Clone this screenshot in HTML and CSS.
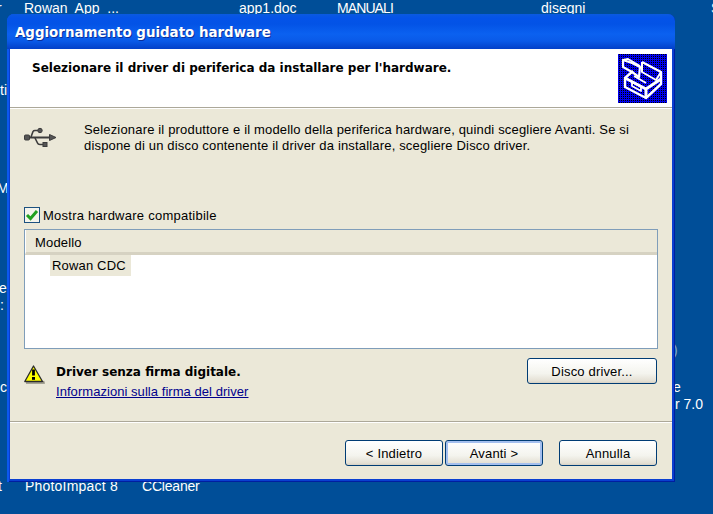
FILE: index.html
```html
<!DOCTYPE html>
<html lang="it">
<head>
<meta charset="utf-8">
<title>Aggiornamento guidato hardware</title>
<link rel="stylesheet" href="styles.css">
</head>
<body>
<div class="desktop">
  <span class="label l-r">r</span>
  <span class="label l-rowan">Rowan&nbsp; App &nbsp;...</span>
  <span class="label l-app">app1.doc</span>
  <span class="label l-man">MANUALI</span>
  <span class="label l-dis">disegni</span>
  <span class="label l-s">S</span>
  <span class="label l-ti">ti</span>
  <span class="label l-m">M</span>
  <span class="label l-e">e</span>
  <span class="label l-t2">:</span>
  <span class="label l-cl">cl</span>
  <span class="label l-b">)</span>
  <span class="label l-e2">e</span>
  <span class="label l-r7">r 7.0</span>
  <span class="label l-t">t</span>
  <span class="label l-photo">PhotoImpact 8</span>
  <span class="label l-cc">CCleaner</span>

  <section class="window">
    <header class="titlebar">Aggiornamento guidato hardware</header>
    <div class="client">
      <div class="head">
        <h1 class="head-title">Selezionare il driver di periferica da installare per l'hardware.</h1>
        <svg class="head-icon" width="49" height="49" viewBox="0 0 49 49" aria-hidden="true">
          <g fill="none" stroke="#fff" stroke-linejoin="round">
            <path d="M24 8 L43 18 L43 30 L28 44 L7 33 L7 24 L15 17" stroke-width="2.400"/>
            <path d="M24 8 L24 18 L38 26 L43 18" stroke-width="2"/>
            <path d="M28 44 L28 35 L43 25" stroke-width="3"/>
            <path d="M7 24 L28 35" stroke-width="3"/>
            <path d="M5 6 L5 13 L14 18 L21 23 L22 13 L14 9 Z" stroke-width="2.200"/>
            <path d="M5 6 L10 5 L22 12" stroke-width="2"/>
            <path d="M14 32 L23 37 L23 33 L14 28 Z" stroke-width="1.800"/>
            <path d="M16 22 L28 29" stroke-width="2"/>
          </g>
        </svg>
      </div>
      <div class="body">
        <div class="intro">
          <svg class="usb" width="34" height="22" viewBox="0 0 34 22" aria-hidden="true">
            <g fill="#555" stroke="#3c3c3c">
              <path d="M5 10.500 H26" fill="none" stroke-width="2"/>
              <path d="M7 10 L9 4.500 Q9.500 3.500 11 3.500 H14" fill="none" stroke-width="1.600"/>
              <path d="M11 11 L13.500 16 Q14 17.500 16 17.500 H19" fill="none" stroke-width="1.600"/>
              <rect x="0.500" y="8" width="5" height="5" rx="1"/>
              <circle cx="16" cy="3.500" r="2.200"/>
              <rect x="19" y="15.500" width="4" height="4"/>
              <path d="M25.500 7.500 L32 10.500 L25.500 13.500 Z" stroke-width="1"/>
            </g>
          </svg>
          <p class="intro-text">Selezionare il produttore e il modello della periferica hardware, quindi scegliere Avanti. Se si<br>dispone di un disco contenente il driver da installare, scegliere Disco driver.</p>
        </div>
        <label class="check">
          <span class="check-box">
            <svg width="14" height="14" viewBox="0 0 14 14" aria-hidden="true"><path d="M2 7 L5.500 10.500 L12 3" fill="none" stroke="#21a121" stroke-width="3"/></svg>
          </span>
          Mostra hardware compatibile
        </label>
        <div class="list">
          <div class="list-head">Modello</div>
          <div class="list-rows"><span class="list-row">Rowan CDC</span></div>
        </div>
        <div class="sign">
          <svg class="warn" width="21" height="19" viewBox="0 0 21 19" aria-hidden="true">
            <path d="M2 18 H20 L19.500 16" fill="none" stroke="#8f8c7e" stroke-width="1.500"/>
            <path d="M9.500 1 L18.500 16.500 H0.800 Z" fill="#ffff00" stroke="#2a2a2a" stroke-width="1.300" stroke-linejoin="round"/>
            <path d="M9.500 4.500 V10.500" stroke="#000" stroke-width="2.800"/>
            <rect x="8" y="12" width="3" height="2.800" fill="#000"/>
          </svg>
          <div class="sign-text">
            <strong class="sign-title">Driver senza firma digitale.</strong>
            <a class="sign-link" href="#">Informazioni sulla firma del driver</a>
          </div>
          <button class="btn btn-disk" type="button">Disco driver...</button>
        </div>
      </div>
      <footer class="foot">
        <button class="btn" type="button">&lt; Indietro</button>
        <button class="btn btn-default" type="button">Avanti &gt;</button>
        <button class="btn btn-cancel" type="button">Annulla</button>
      </footer>
    </div>
  </section>
</div>
</body>
</html>
```
FILE: styles.css
```css
* { box-sizing: border-box; }
html, body { margin: 0; padding: 0; }
body { width: 713px; height: 514px; overflow: hidden; background: #004e98; font-family: "Liberation Sans", Arial, sans-serif; font-size: 13px; letter-spacing: 0.17px; color: #000; }
.desktop { position: relative; width: 713px; height: 514px; overflow: hidden; }
.label { position: absolute; color: #fff; font-size: 14px; letter-spacing: 0; line-height: 16px; white-space: nowrap; }
.l-r { left: -3px; top: 0; }
.l-rowan { left: 24px; top: 0; }
.l-app { left: 239px; top: 0; }
.l-man { left: 337px; top: 0; letter-spacing: -0.900px; }
.l-dis { left: 541px; top: 0; }
.l-s { left: 711px; top: 0; }
.l-ti { left: 0; top: 82px; }
.l-m { left: -3px; top: 180px; }
.l-e { left: -1px; top: 280px; }
.l-t2 { left: 0; top: 297px; }
.l-cl { left: 0; top: 379px; }
.l-b { left: 673px; top: 342px; opacity: 0.5; }
.l-e2 { left: 673px; top: 379px; }
.l-r7 { left: 675px; top: 396px; }
.l-t { left: -2px; top: 478px; }
.l-photo { left: 25px; top: 478px; letter-spacing: 0.200px; }
.l-cc { left: 142px; top: 478px; letter-spacing: -0.200px; }

.window { position: absolute; left: 7px; top: 14px; width: 668px; height: 468px; display: flex; flex-direction: column; border-radius: 7px 7px 0 0; background: #0a3fd0; box-shadow: inset 2px 0 0 #0c58ee, inset -1px -1px 0 #001ea0; }
.titlebar { height: 35px; flex: none; padding: 11px 0 0 8px; border-radius: 7px 7px 0 0; background: linear-gradient(#0a5ae0 0, #0453e8 4px, #0353e6 10px, #0b61f0 20px, #0a5ae8 27px, #0340c8 35px); color: #fff; font-family: "DejaVu Sans", sans-serif; font-size: 13.400px; font-weight: 700; line-height: 16px; letter-spacing: 0; text-shadow: 1px 1px 0 #0a2f9a; }
.client { flex: 1; margin: 0 3px 3px; display: flex; flex-direction: column; background: #ebe8d8; }

.head { height: 60px; flex: none; display: flex; justify-content: space-between; padding: 5px 5px 0 22px; background: #fff; border-bottom: 1px solid #fff; box-shadow: inset 0 -2px 0 -1px #aca899; }
.head-title { margin: 6px 0 0; font-family: "DejaVu Sans", sans-serif; font-size: 12px; font-weight: 700; letter-spacing: 0; line-height: 16px; }
.head-icon { display: block; background: conic-gradient(#000 25%, transparent 0) 0 0 / 2px 2px, #0000f0; }

.body { flex: 1; padding: 0 14px; display: flex; flex-direction: column; }
.intro { display: flex; margin-top: 13px; height: 32px; }
.usb { flex: none; margin-top: 5px; }
.intro-text { margin: 0 0 0 26px; line-height: 16px; white-space: nowrap; }
.check { display: flex; align-items: center; gap: 3px; margin-top: 53px; height: 16px; letter-spacing: 0.25px; }
.check-box { width: 16px; height: 16px; flex: none; border: 1px solid #1c5180; background: #f4f4ec; display: flex; align-items: center; justify-content: center; }
.check-box svg { display: block; }
.list { margin-top: 6px; height: 120px; width: 634px; border: 1px solid #7f9db9; background: #fff; display: flex; flex-direction: column; }
.list-head { height: 25px; flex: none; padding: 5px 0 0 9px; line-height: 16px; background: #ebe8d8; border-bottom: 3px solid #d6d2c2; border-left: 1px solid #fff; }
.list-rows { padding-left: 25px; }
.list-row { display: inline-block; height: 21px; padding: 3px 2px 0; line-height: 16px; background: #ebe8d8; width: 81px; white-space: nowrap; }
.sign { display: flex; margin-top: 9px; }
.warn { flex: none; margin: 7px 0 2px; }
.sign-text { display: flex; flex-direction: column; margin: 6px 0 0 11px; gap: 4px; }
.sign-title { font-family: "DejaVu Sans", sans-serif; font-size: 12px; font-weight: 700; letter-spacing: 0; line-height: 16px; }
.sign-link { color: #00008c; line-height: 16px; text-decoration: underline; letter-spacing: 0.05px; }
.btn { width: 98px; height: 26px; padding: 0; border: 1px solid #003c74; border-radius: 3px; background: linear-gradient(#fff, #f4f4ee 60%, #e4e0d4 92%, #d6d0c4); font: inherit; letter-spacing: inherit; color: #000; text-align: center; }
.btn-disk { width: 130px; margin-left: auto; margin-right: 1px; }
.foot { height: 58px; flex: none; display: flex; align-items: flex-start; padding: 18px 0 0 335px; border-top: 1px solid #aca899; box-shadow: inset 0 1px 0 #fff; }
.btn-default { margin-left: 2px; box-shadow: inset 0 0 0 2px #a4bfee; }
.btn-cancel { margin-left: 16px; }
```
